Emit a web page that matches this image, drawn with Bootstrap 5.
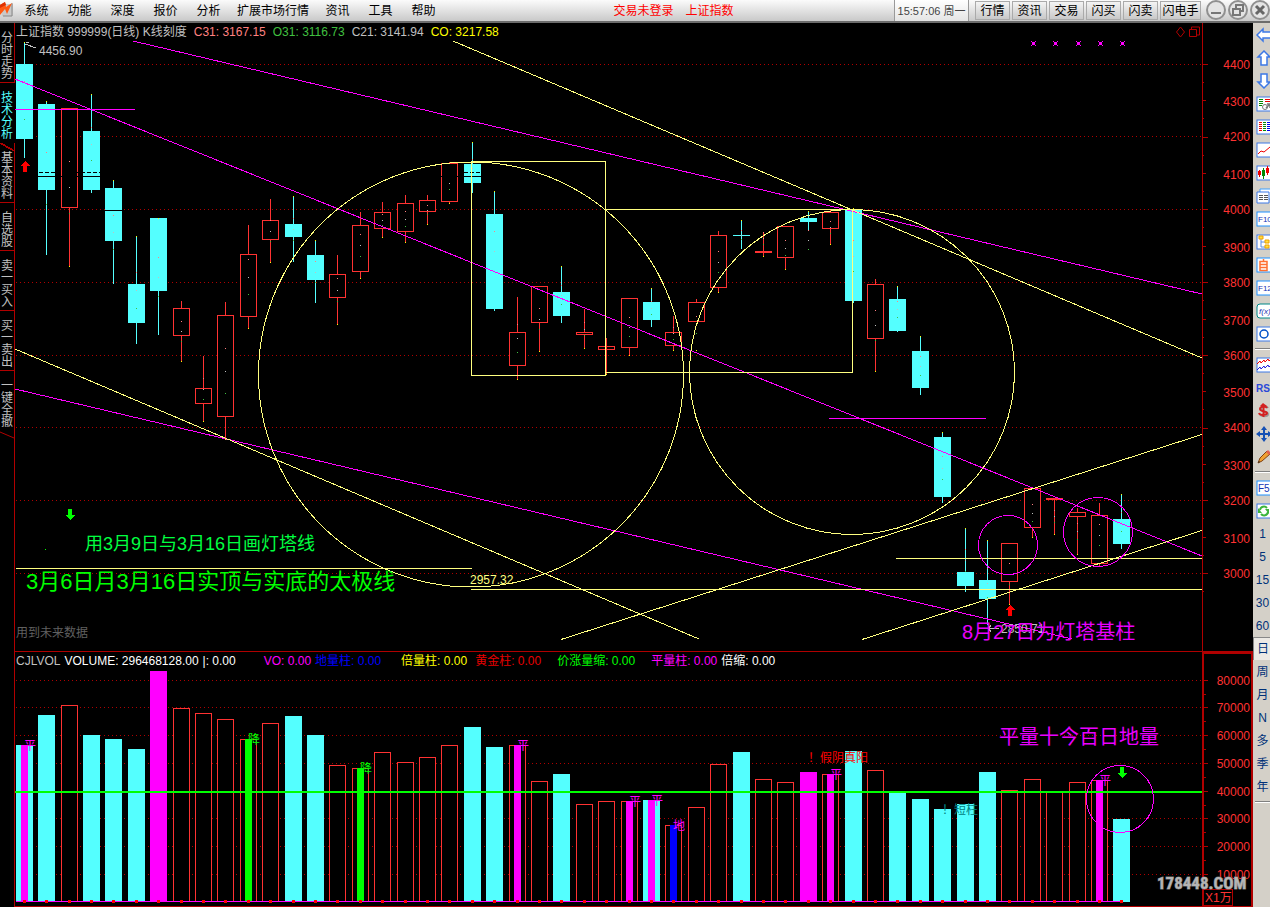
<!DOCTYPE html>
<html lang="zh-CN">
<head>
<meta charset="utf-8">
<meta name="viewport" content="width=device-width, initial-scale=1">
<title>上证指数 999999 K线</title>
<link rel="stylesheet" href="https://cdn.jsdelivr.net/npm/bootstrap@5.3.0/dist/css/bootstrap.min.css">
<style>
:root { --line: #b00000; --label: #ff3232; --silver: #c0c0c0; }
body { background: #000; color: var(--silver); font: 12px/16px "Liberation Sans", "Noto Sans CJK SC", sans-serif; }
button { font: inherit; }
.topbar { height: 23px; background: linear-gradient(#fbfbfb, #c9c9c9); border-bottom: 2px solid #6c6c6c; color: #000; }
.menu-btn { min-width: 43px; padding: 0 7px; border: 0; background: none; color: #000; }
.notice-text { color: #f00; }
.clock { width: 75px; border: solid #999; border-width: 0 1px; background: linear-gradient(#fff, #e4e4e4); color: #444; font-size: 11px; }
.quick-btn { min-width: 35px; height: 19px; padding: 0 4px; border: 1px solid #aaa; background: linear-gradient(#f4f4f4, #c8c8c8); color: #000; line-height: 16px; }
.quick-btn.long { min-width: 41px; padding: 0; }
.quick { gap: 2px; padding: 1px 3px 0 6px; }
.win-btn { width: 22px; height: 21px; padding: 0; border: 0; background: none; }
.win-btn svg { display: block; }
.rail { width: 15px; border-right: 1px solid var(--line); }
.rail-btn { width: 14px; height: 60px; padding: 6px 1px 0; border: 0; border-bottom: 1px solid var(--line); background: none; color: var(--silver); line-height: 12px; word-break: break-all; }
.rail-btn.short { height: 48px; }
.rail-btn.active { width: 15px; padding-right: 2px; color: #54ffff; background: #000; margin-right: -1px; }
.rail-btn.slant { border-bottom: 0; }
.rail-btn.after-active { background: linear-gradient(to top right, transparent 45%, var(--line) 45%, var(--line) 57%, transparent 57%) 0 0 / 14px 8px no-repeat; }
.legend-row { height: 18px; }
.legend-items { gap: 7px; padding-left: 1px; border-right: 1px solid var(--line); }
.vol-row { height: 19px; border-top: 1px solid var(--line); }
.vol-items { gap: 4px; padding-left: 1px; }
.vol-corner { width: 51px; border: 2px solid var(--line); border-bottom: 0; }
.price-corner { width: 50px; }
.gap-mid { margin-left: 12px; }
.plot { display: block; width: 100%; height: auto; background: #000; }
.plot text { fill: var(--label); font-size: 12px; }
.plot .site-name { font: bold 17px "Liberation Sans Narrow", "Roboto Condensed", "Liberation Sans", sans-serif; fill: #b4b4b4; stroke: #777; stroke-width: 1; paint-order: stroke; }
.tools { width: 17px; background: #d4d0c8; }
.tool-btn { width: 17px; height: 23px; padding: 0; border: 0; background: none; color: #003078; text-align: center; }
.tool-btn.wide { padding-left: 2px; }
.tool-btn.active { background: #ece9e4; border: solid #888; border-width: 1px 0 0 1px; }
.tool-btn svg { display: block; margin-left: 3px; }
.tool-btn text { font-family: "Liberation Sans Narrow", "Liberation Sans", sans-serif; font-size: 8px; }
.tool-sep { height: 2px; margin: 3px 0 3px 2px; background: linear-gradient(#808080 50%, #fff 50%); }
.c-pink { color: #ff8080; } .c-green { color: #40c040; } .c-yellow { color: #ff0; } .c-white { color: #fff; }
.c-magenta { color: #f0f; } .c-blue { color: #00f; } .c-red { color: #e60000; } .c-lime { color: #0f0; }
</style>
</head>
<body>
<header class="topbar d-flex align-items-stretch text-nowrap">
  <svg width="15" height="18" viewBox="0 0 15 18" aria-hidden="true"><path d="M0 4h13v12H2z" fill="#c9c9c9"/><path d="M12 3v13H3" fill="none" stroke="#888"/><path d="M0 5l5-3 1 5 6-4-5 11-2-5-5 6V9z" fill="#ff5a14"/><path d="M0 5l5-3 1 3-6 3z" fill="#e03000"/></svg>
  <nav class="d-flex" aria-label="主菜单">
    <button class="menu-btn">系统</button><button class="menu-btn">功能</button><button class="menu-btn">深度</button><button class="menu-btn">报价</button><button class="menu-btn">分析</button><button class="menu-btn">扩展市场行情</button><button class="menu-btn">资讯</button><button class="menu-btn">工具</button><button class="menu-btn">帮助</button>
  </nav>
  <div class="notice-text flex-grow-1 d-flex justify-content-center align-items-center gap-2"><span class="pe-1 ps-5">交易未登录</span><span class="pe-3 me-4">上证指数</span></div>
  <div class="clock d-flex align-items-center justify-content-center">15:57:06 周一</div>
  <div class="quick d-flex">
    <button class="quick-btn">行情</button><button class="quick-btn">资讯</button><button class="quick-btn">交易</button><button class="quick-btn">闪买</button><button class="quick-btn">闪卖</button><button class="quick-btn long">闪电手</button>
  </div>
  <div class="d-flex">
    <button class="win-btn" aria-label="最小化"><svg width="22" height="21" viewBox="-1 0 22 21" fill="none"><circle cx="11" cy="10" r="9" fill="#e4e4e4" stroke="#909090" stroke-width="2"/><path d="M6 13h10" stroke="#777" stroke-width="2"/></svg></button>
    <button class="win-btn" aria-label="还原"><svg width="22" height="21" viewBox="-1 0 22 21"><circle cx="11" cy="10" r="9" fill="#e4e4e4" stroke="#909090" stroke-width="2"/><path d="M9 8V5h7v6h-3M6 9h7v6H6z" fill="none" stroke="#777" stroke-width="2"/></svg></button>
    <button class="win-btn" aria-label="关闭"><svg width="22" height="21" viewBox="-1 0 22 21"><circle cx="11" cy="10" r="9" fill="#e4e4e4" stroke="#909090" stroke-width="2"/><path d="M7 6l8 8m0-8l-8 8" stroke="#666" stroke-width="3"/></svg></button>
  </div>
</header>

<div class="d-flex align-items-stretch">
  <nav class="rail flex-shrink-0 d-flex flex-column" aria-label="视图">
    <button class="rail-btn">分时走势</button>
    <button class="rail-btn active slant">技术分析</button>
    <button class="rail-btn after-active">基本资料</button>
    <button class="rail-btn short">自选股</button>
    <button class="rail-btn">卖一买入</button>
    <button class="rail-btn">买一卖出</button>
    <button class="rail-btn slant">一键全撤</button>
    <svg width="14" height="8" aria-hidden="true"><path d="M0 1l14 6" stroke="#b00000"/></svg>
  </nav>

  <main class="flex-grow-1" style="min-width:0">
    <section>
      <div class="legend-row d-flex text-nowrap">
        <div class="legend-items d-flex flex-grow-1 align-items-center">
          <span>上证指数 999999(日线) K线刻度</span><span class="c-pink">C31: 3167.15</span><span class="c-green">O31: 3116.73</span><span>C21: 3141.94</span><span class="c-yellow">CO: 3217.58</span>
          <svg class="ms-auto" width="26" height="14" fill="none" stroke="#b00000" aria-hidden="true"><path d="M4.500 2l4 5-4 5-4-5zM13.500 4.500h7v7h-7zM15.500 4v-2h8v8h-3"/></svg>
        </div>
        <div class="price-corner"></div>
      </div>
      <svg class="plot" id="price" viewBox="15 41 1238 610" role="img" aria-label="日K线图"></svg>
    </section>
    <section>
      <div class="vol-row d-flex text-nowrap">
        <div class="vol-items d-flex flex-grow-1 align-items-center">
          <span>CJLVOL</span><span class="c-white">VOLUME: 296468128.00</span><span class="c-white me-1">|: 0.00</span><span class="c-magenta ms-3 ps-1">VO: 0.00</span><span class="c-blue">地量柱: 0.00</span><span class="c-yellow ms-3">倍量柱: 0.00</span><span class="c-red ms-1">黄金柱: 0.00</span><span class="c-lime gap-mid">价涨量缩: 0.00</span><span class="c-magenta gap-mid">平量柱: 0.00</span><span class="c-white">倍缩: 0.00</span>
        </div>
        <div class="vol-corner"></div>
      </div>
      <svg class="plot" id="volume" viewBox="15 670 1238 237" role="img" aria-label="成交量图"></svg>
    </section>
  </main>

  <nav class="tools flex-shrink-0 d-flex flex-column overflow-hidden" id="tools" aria-label="工具栏"></nav>
</div>

<script>
const CYAN = '#54ffff', RED = '#ff3232', MAG = '#ff00ff', PALE = '#ffff80', LINE = '#b00000';
const rect = (x, y, w, h, fill, extra = '') => `<rect x="${x}" y="${y}" width="${w}" height="${h}" fill="${fill}" ${extra}/>`;
const box = (x, y, x2, y2, c, fill = 'none') => rect(x + .5, y + .5, x2 - x, y2 - y, fill, `stroke="${c}"`);
const line = (x1, y1, x2, y2, c) => `<path d="M${x1} ${y1}L${x2} ${y2}" stroke="${c}"/>`;
const circle = (x, y, r, c) => `<circle cx="${x}" cy="${y}" r="${r}" fill="none" stroke="${c}"/>`;
const label = (x, y, t, c, size = 12, anchor = 'start') => `<text x="${x}" y="${y}" text-anchor="${anchor}" style="fill:${c};font-size:${size}px">${t}</text>`;
const center = i => Math.floor(24.39 + 22.4 * i);
const dotted = y => `<path d="M16 ${y + .5}H1202" stroke="${LINE}" stroke-dasharray="1 3"/>`;
const arrow = (x, y, c, d) => `<path d="M${x} ${y}l5 ${5 * d}h-3v${6 * d}h-4v${-6 * d}h-3z" fill="${c}"/>`;

// colour, body top, body bottom, high, low, then the wick's own ends where they differ
const candles = [
 ['c',64,139,42,158],['c',104,190,101,255],['r',108,208,108,266],['c',131,190,94,193],['c',188,241,180,284],
 ['c',284,323,236,344],['c',218,291,218,335],['r',308,336,301,361],['r',388,404,356,421],['r',315,417,302,439],
 ['r',254,317,225,328],['r',220,240,199,262],['c',224,237,196,262],['c',255,280,240,303],['r',274,298,255,324],
 ['r',225,272,212,278],['r',212,229,202,237],['r',203,232,195,242],['r',200,212,195,224],['r',163,202,162,203],
 ['c',164,183,142,193],['c',214,309,191,311],['r',332,366,297,379],['r',286,323,286,351],['c',292,316,266,323],
 ['r',332,335,309,348],['r',346,350,338,374],['r',298,348,298,355],['c',302,320,288,327],['r',332,346,316,350],
 ['r',302,322,299,350,299,322],['r',235,288,231,292],['c',235,236,220,249],['r',251,253,220,256,233,256],['r',226,258,226,269],
 ['c',218,222,211,268,211,231],['r',212,229,210,244],['c',210,301,208,303],['r',284,339,279,371],['c',299,331,286,332],
 ['c',351,388,336,395],['c',437,497,432,503],['c',572,586,528,592],['c',580,599,540,625],['r',543,582,543,604],
 ['r',488,528,488,537],['r',498,500,498,534],['r',512,517,508,554],['r',515,564,503,566],['c',519,544,494,549]];

let p = '<g shape-rendering="crispEdges">';
[64,136,209,282,355,427,500,573].forEach(y => p += dotted(y));
candles.forEach(([k, t, b, hi, lo, w1 = hi, w2 = lo], i) => {
  const x = center(i), c = k === 'c' ? CYAN : RED;
  p += rect(x, w1, 1, w2 - w1, c);
  p += k === 'c' ? rect(x - 8, t, 17, b - t, c) : box(x - 8, t, x + 8, b - 1, c, '#000');
  if (lo - hi > 12) {
    p += rect(x, Math.round(hi + (lo - hi) / 3), 1, 1, '#ff8080') + rect(x, Math.round((hi + lo) / 2), 1, 1, '#c0c0c0') +
         rect(x, Math.round(lo - (lo - hi) / 3), 1, 1, '#40c040') + rect(x, k === 'c' ? hi : lo, 1, 1, '#ff0');
  }
});
p += `<path d="M39 172.500H103M464 172.500H481" stroke="#000" stroke-dasharray="4 2"/>` + line(37, 176.5, 481, 176.5, '#000') + line(105, 210.5, 122, 210.5, '#000');
p += line(133, 41, 1202, 294, MAG) + line(15, 79, 1202, 556, MAG) + line(15, 389, 1072, 639, MAG) +
     line(15, 109.5, 135, 109.5, MAG) + line(829, 418.5, 986, 418.5, MAG) +
     line(453, 41, 1202, 358, PALE) + line(15, 349, 699, 639, PALE) + line(561, 639.5, 1202, 434.5, PALE) + line(862, 639.5, 1202, 530.5, PALE) +
     line(16, 568.5, 472, 568.5, PALE) + line(471, 589.5, 1202, 589.5, PALE) + line(896, 558.5, 1202, 558.5, PALE) +
     box(471, 161, 605, 375, PALE) + box(605, 209, 852, 372, PALE) + line(606.5, 338, 606.5, 372, RED) +
     circle(471, 374.5, 212.5, PALE) + circle(852, 372, 162.5, PALE) + circle(1008, 545, 29.5, MAG) + circle(1098, 532, 34.5, MAG);
[1033,1055,1078,1100,1122].forEach(x => p += rect(x - 1, 42, 3, 3, MAG) + [[-2,41],[2,41],[-2,45],[2,45]].map(([d, y]) => rect(x + d, y, 1, 1, MAG)).join(''));
p += arrow(25, 161, '#f00', 1) + arrow(1010, 605, '#f00', 1) + arrow(70, 520, '#0f0', -1) + rect(45, 549, 1, 1, '#0f0');
p += line(25, 44, 36, 48, '#c0c0c0') + line(25.5, 42.5, 29, 42.5, '#c0c0c0') + `<path d="M999 628.500h-11m3-3l-3 3 3 3" fill="none" stroke="#c0c0c0"/>`;
p += line(1202.5, 41, 1202.5, 651, LINE);
for (let n = 0; n < 15; n++) {
  const y = Math.round(64 + 36.36 * n);
  p += line(1203, y + .5, n % 2 ? 1206 : 1208, y + .5, LINE) + line(1203, y + 18.5, 1204, y + 18.5, LINE);
}
p += '</g>';
[64,101,136,174,209,247,282,320,355,392,427,465,500,538,573].forEach((y, i) => p += label(1250, y + 5, 4400 - 100 * i, RED, 12, 'end'));
p += label(39, 55, '4456.90', '#c0c0c0') + label(470, 584, '2957.32', PALE) + label(1001, 633, '2850.71', '#c0c0c0') +
     label(16, 637, '用到未来数据', '#606060') + label(85, 550, '用3月9日与3月16日画灯塔线', '#00ff40', 18) +
     label(26, 589, '3月6日月3月16日实顶与实底的太极线', '#00ff00', 22) + label(962, 639, '8月27日为灯塔基柱', '#ea00ff', 20);
document.getElementById('price').innerHTML = p;

// colour, bar top, core colour, marker
const vols = [
 ['c',745,MAG,'平'],['c',715],['r',705],['c',735],['c',739],['c',749],['m',671],['r',708],['r',713],['r',719],
 ['r',739,'#0f0','降'],['r',723],['c',716],['c',735],['r',765],['r',768,'#0f0','降'],['r',752],['r',762],['r',757],['r',745],
 ['c',727],['c',747],['r',745,MAG,'平'],['r',781],['c',774],['r',804],['r',801],['r',801,MAG,'平'],['c',800,MAG,'平'],['r',825,'#00f','地'],
 ['r',807],['r',764],['c',752],['r',779],['r',782],['m',772],['r',774,MAG,'平'],['c',751],['r',770],['c',792],
 ['c',799],['c',809],['c',804],['c',772],['r',790],['r',779],['r',791],['r',782],['r',780,MAG,'平'],['c',819]];
let v = '<g shape-rendering="crispEdges">', marks = '';
[680,707,735,763,818,846,874].forEach(y => v += dotted(y));
vols.forEach(([k, t, core, mark], i) => {
  const x = center(i);
  v += k === 'r' ? box(x - 8, t, x + 8, 901, RED, '#000') : rect(x - 8, t, 17, 902 - t, k === 'c' ? CYAN : MAG);
  if (core) v += rect(x - 3, t, 7, 902 - t, core);
  if (mark) marks += label(x, t + 5, mark, mark === '降' ? '#0f0' : MAG);
});
v += line(16, 901.5, 1122, 901.5, MAG);
vols.forEach((_, i) => v += rect(center(i) - 1, 900, 3, 3, '#f00'));
v += rect(15, 791, 1187, 2, '#0f0') + circle(1120, 799, 33.5, MAG) + arrow(1122, 778, '#0f0', -1);
v += rect(15, 906, 1238, 1, LINE) + rect(1202, 670, 2, 237, LINE) + rect(1251, 670, 2, 237, LINE);
[680,707,735,763,791,818,846,874].forEach(y => v += line(1204, y + .5, 1208, y + .5, LINE) + line(1204, y + 14.5, 1206, y + 14.5, LINE));
v += box(1203, 889, 1232, 905, LINE) + '</g>' + marks;
[680,707,735,763,791,818,846,874].forEach((y, i) => v += label(1250, y + 5, 80000 - 10000 * i, RED, 12, 'end'));
v += label(1205, 902, 'X1万', RED) + label(808, 762, '！', '#f00') + label(820, 762, '假阴真阳', '#f00') +
     label(942, 814, '！', '#008080') + label(954, 814, '短柱', '#008080') + label(999, 744, '平量十今百日地量', '#ea00ff', 20) +
     '<text class="site-name" x="1157" y="889">178448.COM</text>';
document.getElementById('volume').innerHTML = v;

const frame = (inner, c = '#3c78e6') => `<rect x="1" y="1" width="20" height="14" fill="#fff" stroke="${c}" stroke-width="1"/>${inner}`;
const rows = (x, w, c) => [4,6,8,10,12].map(y => `<path d="M${x} ${y - .5}h${w}" stroke="${c}"/>`).join('');
const word = (t, c = '#1434b4') => `<text x="2" y="11" fill="${c}">${t}</text>`;
const arrowStyle = 'fill="#fff" stroke="#3c78e6" stroke-width="1.500"';
const icons = [
 ['左移', `<path d="M1 8l6-6v3h9v6H7v3z" ${arrowStyle}/>`],
 ['放大', `<path d="M8 1l6 6h-3v8H5V7H2z" ${arrowStyle}/>`],
 ['缩小', `<path d="M8 15l6-6h-3V1H5v8H2z" ${arrowStyle}/>`],
 ['报表', frame('<path d="M3 3.500h4M3 5.500h4M3 7.500h4M3 9.500h3" stroke="#080"/><path d="M9 3.500h5M9 5.500h5" stroke="#e00"/><circle cx="9" cy="11" r="2.500" fill="#fff" stroke="#777"/><path d="M10 12l3-3m-2-1h3v4" fill="none" stroke="#777" stroke-width="1.500"/>')],
 ['列表', frame(rows(3, 3, '#e00') + rows(7, 3, '#080') + rows(11, 3, '#00e'))],
 ['走势', frame('<path d="M2 12l3-3 3 1 6-5" fill="none" stroke="#e00"/>')],
 ['K线', frame('<path d="M3.500 5v7M11.500 1v9" stroke="#e00"/><path d="M2 6h3v4H2zM10 3h3v5h-3z" fill="#e00"/><path d="M7.500 3v11" stroke="#080"/><path d="M6 5h3v6H6z" fill="#080"/>')],
 ['资料', '<path d="M4 1h16v10H4z" fill="#fff" stroke="#3ca0ff"/><path d="M1 4h12v11H1z" fill="#fff" stroke="#3c78e6"/><path d="M3 7.500h4m1 0h4M3 9.500h4m1 0h4M3 11.500h4m1 0h4" stroke="#555"/>'],
 ['F10', frame(word('F10'), '#1e90ff')],
 ['板块', frame('<path d="M5 5v8h5M5 8h5" fill="none" stroke="#5a8ce6"/><path d="M3 2h4v3H3zM9 6h4v3H9zM9 11h4v3H9z" fill="#ffe040" stroke="#f0a000"/>')],
 ['自选', frame('<path d="M4 4.500h7v9H4zM4 7.500h7M4 10.500h7M7.500 2v2" fill="none" stroke="#ff7030" stroke-width="1.500"/>', '#1e90ff')],
 ['F12', frame(word('F12'), '#1e90ff')],
 ['公式', '<rect x="1" y="1" width="20" height="14" rx="3" fill="#fff" stroke="#088"/><text x="3" y="11" fill="#1434b4" font-style="italic">f(x)</text>'],
 ['圆', frame('<circle cx="8" cy="8" r="4" fill="none" stroke="#0050c8" stroke-width="1.500"/>')],
 null,
 ['叠加', frame('<path d="M1 7l3-3 1 2 3-3 1 2 3-3 1 2 3-3" fill="none" stroke="#e00"/><path d="M1 13l3-3 1 2 3-3 1 2 3-3 1 2 3-3" fill="none" stroke="#22d"/>')],
 ['RSI', '<text x="0" y="12" fill="#2a48d8" style="font-size:10px" font-weight="bold">RSI</text>'],
 ['除权', '<path d="M12 5c-1-2-7-2-7 1s7 2 7 5-7 3-8 0" fill="none" stroke="#999" stroke-width="2"/><path d="M11 5c-1-2-7-2-7 1s7 2 7 4-7 3-8 0M7.500 2v12" fill="none" stroke="#d42020" stroke-width="2"/><path d="M4 3l3-3 4 3z" fill="#d42020"/>'],
 ['移动', '<path d="M8 0l3 4H9v3h3V5l4 3-4 3V9H9v3h2l-3 4-3-4h2V9H4v2L0 8l4-3v2h3V4H5z" fill="#1450b4"/>'],
 ['画线', '<path d="M2 14l2-5 7-7 3 3-8 7z" fill="#f0a030" stroke="#804010"/><path d="M10 3l2-2 3 3-2 2z" fill="#e06050"/><path d="M2 14l1-2 1 1z" fill="#222"/>'],
 null,
 ['F5', frame('<text x="2" y="12" fill="#1434b4" style="font-size:10px">F5</text>', '#1e90ff')],
 ['刷新', frame('<path d="M4 7a4 4 0 0 1 7-2" fill="none" stroke="#3cb43c" stroke-width="2"/><path d="M2 5v5h4zM13 11V6H9z" fill="#3cb43c"/><path d="M12 9a4 4 0 0 1-7 2" fill="none" stroke="#3cb43c" stroke-width="2"/>')],
 '1', '5', '15', '30', '60', '*日', '周', '月', 'N', '多', '季', '年', null];
document.getElementById('tools').innerHTML = icons.map(t => {
  if (!t) return '<div class="tool-sep"></div>';
  if (Array.isArray(t)) return `<button class="tool-btn" aria-label="${t[0]}"><svg width="14" height="16">${t[1]}</svg></button>`;
  const on = t[0] === '*', s = on ? t.slice(1) : t;
  return `<button class="tool-btn${on ? ' active' : ''} wide">${s}</button>`;
}).join('');
</script>
<script src="https://cdn.jsdelivr.net/npm/bootstrap@5.3.0/dist/js/bootstrap.bundle.min.js"></script>
</body>
</html>
